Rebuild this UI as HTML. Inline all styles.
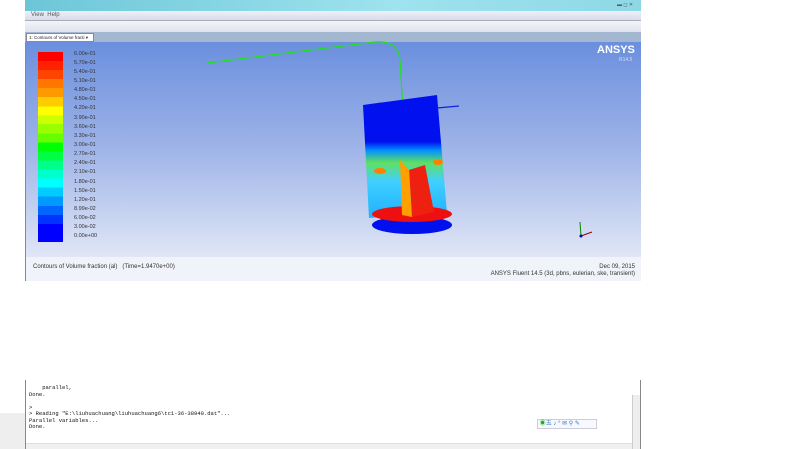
<!DOCTYPE html>
<html><head><meta charset="utf-8"><style>
*{margin:0;padding:0;box-sizing:border-box}
body{width:800px;height:449px;background:#fff;position:relative;overflow:hidden;font-family:"Liberation Sans",sans-serif}
.abs{position:absolute}
#title{left:25px;top:0;width:616px;height:11px;background:linear-gradient(90deg,#6cc6d8,#9ee3ee 60%,#8ed8e6);}
#menu{left:25px;top:11px;width:616px;height:9px;background:linear-gradient(#eef0f8,#d8dcea);font-size:6px;color:#555;padding-left:6px;line-height:9px}
#tool{left:25px;top:20px;width:616px;height:12px;background:linear-gradient(#f4f5fa,#dfe2ee);border-top:1px solid #aab}
#tabs{left:25px;top:32px;width:616px;height:10px;background:#a3b8d0}
#tab{left:26px;top:33px;width:68px;height:9px;background:#fff;border:1px solid #889;font-size:4.5px;line-height:7px;padding-left:2px;color:#222}
#gfx{left:25px;top:42px;width:616px;height:215px;background:linear-gradient(#6b8fde,#9fb4e8 50%,#e0e6f6 100%);border-left:1px solid #888}
#cap{left:25px;top:257px;width:616px;height:24px;background:#f1f3fa;border-left:1px solid #888;font-size:6px;color:#333}
#console{left:25px;top:380px;width:616px;height:69px;background:#fff;border-left:1px solid #888;border-right:1px solid #888;font-family:"Liberation Mono",monospace;font-size:5.5px;color:#111;line-height:6.5px;padding-left:3px;padding-top:5px}
.lab{position:absolute;left:74px;font-size:5.5px;color:#333}
</style></head><body>
<div id="title" class="abs"><div class="abs" style="right:4px;top:2px;width:20px;height:7px;font-size:5px;color:#555">▬ ◻ ✕</div></div>
<div id="menu" class="abs">View &nbsp;Help</div>
<div id="tool" class="abs"></div>
<div id="tabs" class="abs"></div>
<div id="tab" class="abs">1: Contours of Volume fracti ▾</div>
<div id="gfx" class="abs"></div>
<div class="abs" style="left:597px;top:44px;color:#fff;font-weight:bold;font-size:11px">ANSYS</div>
<div class="abs" style="left:619px;top:57px;color:#dde;font-size:5px">R14.5</div>
<div class="abs" style="left:38px;top:52px;width:25px;height:190px;background:linear-gradient(#f00 0,#f00 4.76%,#f20 4.76%,#f20 9.5%,#f40 9.5%,#f40 14.3%,#f70 14.3%,#f70 19%,#f90 19%,#f90 23.8%,#fc0 23.8%,#fc0 28.6%,#ff0 28.6%,#ff0 33.3%,#cf0 33.3%,#cf0 38%,#9f0 38%,#9f0 42.8%,#6f0 42.8%,#6f0 47.6%,#0f0 47.6%,#0f0 52.4%,#0f4 52.4%,#0f4 57%,#0f8 57%,#0f8 61.9%,#0fc 61.9%,#0fc 66.7%,#0ff 66.7%,#0ff 71.4%,#0cf 71.4%,#0cf 76%,#09f 76%,#09f 81%,#06f 81%,#06f 85.7%,#03f 85.7%,#03f 90.5%,#00f 90.5%)"></div>
<div class="lab" style="top:51px">6.00e-01</div><div class="lab" style="top:60px">5.70e-01</div><div class="lab" style="top:69px">5.40e-01</div><div class="lab" style="top:78px">5.10e-01</div><div class="lab" style="top:87px">4.80e-01</div><div class="lab" style="top:96px">4.50e-01</div><div class="lab" style="top:105px">4.20e-01</div><div class="lab" style="top:115px">3.90e-01</div><div class="lab" style="top:124px">3.60e-01</div><div class="lab" style="top:133px">3.30e-01</div><div class="lab" style="top:142px">3.00e-01</div><div class="lab" style="top:151px">2.70e-01</div><div class="lab" style="top:160px">2.40e-01</div><div class="lab" style="top:169px">2.10e-01</div><div class="lab" style="top:179px">1.80e-01</div><div class="lab" style="top:188px">1.50e-01</div><div class="lab" style="top:197px">1.20e-01</div><div class="lab" style="top:206px">8.99e-02</div><div class="lab" style="top:215px">6.00e-02</div><div class="lab" style="top:224px">3.00e-02</div><div class="lab" style="top:233px">0.00e+00</div>
<svg class="abs" style="left:0;top:0" width="800" height="449">
<defs><linearGradient id="tk" x1="0" y1="0" x2="0" y2="1">
<stop offset="0" stop-color="#0010ee"/><stop offset="0.38" stop-color="#0010ee"/><stop offset="0.45" stop-color="#0090ff"/><stop offset="0.55" stop-color="#60e060"/><stop offset="0.7" stop-color="#40d0ff"/><stop offset="1" stop-color="#20b0ff"/></linearGradient></defs>
<path d="M207,63 L375,42 Q398,40 400,60 L403,110 L407,215" stroke="#20e020" stroke-width="1.2" fill="none"/>
<polygon points="363,105 437,95 447,213 369,218" fill="url(#tk)"/>
<line x1="437" y1="108" x2="459" y2="106" stroke="#1020e0" stroke-width="1.2"/>
<ellipse cx="412" cy="225" rx="40" ry="9" fill="#0010ee"/>
<ellipse cx="412" cy="214" rx="40" ry="8" fill="#ee1010"/>
<polygon points="409,170 425,165 434,212 412,217" fill="#ee2010"/>
<polygon points="400,160 409,170 412,217 402,215" fill="#ffa000"/>
<ellipse cx="380" cy="171" rx="6" ry="3" fill="#ff8000"/><ellipse cx="438" cy="162" rx="5" ry="3" fill="#ff8000"/>
<line x1="581" y1="236" x2="580" y2="222" stroke="#080" stroke-width="1"/>
<line x1="581" y1="236" x2="592" y2="232" stroke="#800" stroke-width="1"/>
<circle cx="581" cy="236" r="1.5" fill="#00a"/>
</svg>
<div id="cap" class="abs"><div class="abs" style="left:7px;top:7px">Contours of Volume fraction (al) &nbsp;&nbsp;(Time=1.9470e+00)</div>
<div class="abs" style="right:6px;top:7px">Dec 09, 2015</div>
<div class="abs" style="right:6px;top:14px">ANSYS Fluent 14.5 (3d, pbns, eulerian, ske, transient)</div></div>
<div class="abs" style="left:0;top:413px;width:25px;height:36px;background:#eee"></div>
<div id="console" class="abs">&nbsp;&nbsp;&nbsp;&nbsp;parallel,<br>Done.<br><br>&gt;<br>&gt; Reading "E:\liuhuachuang\liuhuachuang6\tc1-36-38940.dat"...<br>Parallel variables...<br>Done.</div>
<div class="abs" style="left:26px;top:443px;width:606px;height:6px;background:#f0f0f0;border-top:1px solid #ddd"></div>
<div class="abs" style="left:632px;top:395px;width:8px;height:54px;background:#eee;border-left:1px solid #ccc"></div>
<div class="abs" style="left:537px;top:419px;width:60px;height:10px;border:1px solid #ccd;background:#f8f8ff;font-size:6px;color:#37c;line-height:8px">&nbsp;<span style="color:#2a2">◉</span>五 ♪ ° ✉ ⚲ ✎</div>
</body></html>
